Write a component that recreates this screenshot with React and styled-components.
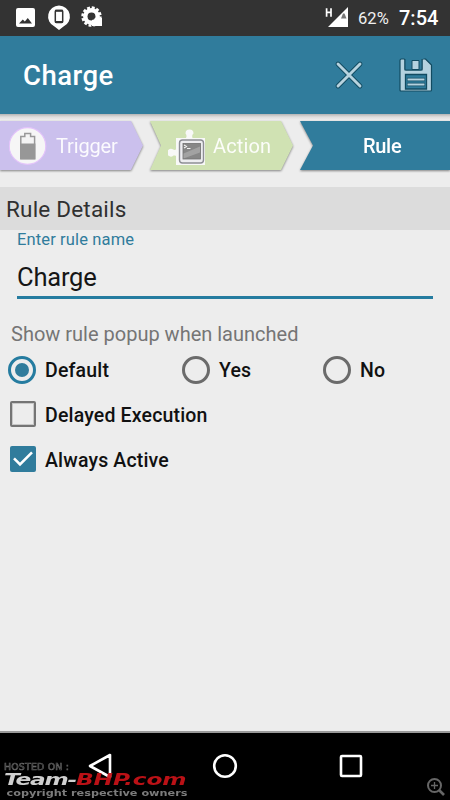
import React, { useState } from 'react';
import styled, { createGlobalStyle } from 'styled-components'

const GlobalStyle = createGlobalStyle`
  *{
    box-sizing:border-box;
  }
  body{
    margin:0;
    background-color:#000;
    font-family:Roboto, sans-serif;
  }
  svg{
    display:block;
    flex:none;
  }
`

const Container = styled.div`
  position:relative;
  display:flex;
  flex-direction:column;
  width:450px;
  height:800px;
  overflow:hidden;
  background-color:#ededed;
`

const StatusBar = styled.div`
  display:flex;
  justify-content:space-between;
  height:36px;
  background-color:#333;
`

const Battery = styled.span`
  width:41px;
  padding-top:8px;
  color:#f0f0f0;
  font-size:16.5px;
  line-height:21px;
  letter-spacing:0.1px;
`

const Clock = styled.span`
  width:51px;
  padding-top:7px;
  color:#fff;
  font-size:20px;
  font-weight:500;
  line-height:22px;
`

const StatusRight = styled.div`
  display:flex;
`

const AppBar = styled.header`
  display:flex;
  align-items:center;
  height:78px;
  padding-left:23px;
  background-color:#307c9c;
`

const Title = styled.h1`
  flex:1;
  margin:0;
  padding-top:1px;
  color:#fff;
  font-size:27.5px;
  font-weight:500;
  line-height:32px;
  letter-spacing:0.5px;
`

const IconButton = styled.button`
  display:flex;
  margin-right:${props => props.gap}px;
  padding:0;
  border:none;
  background:none;
  cursor:pointer;
`

const Steps = styled.nav`
  display:flex;
  height:73px;
  padding-top:7px;
  background:linear-gradient(#b4b4b4, #dedede 3px, #ededed 6px);
`

const StepShadow = styled.div`
  width:150px;
  height:49px;
  filter:drop-shadow(0 1px 1px rgba(0,0,0,0.45));
`

const Step = styled.div`
  display:flex;
  align-items:center;
  height:49px;
  padding-left:${props => props.inset}px;
  gap:${props => props.gap || 0}px;
  color:${props => props.active ? '#fff' : 'rgba(255,255,255,0.92)'};
  background-color:${props => props.bg};
  clip-path:${props => props.shape};
  font-size:20px;
  font-weight:${props => props.active ? 500 : 400};
  letter-spacing:${props => props.spacing}px;
`

const SectionTitle = styled.h2`
  height:43px;
  margin:0;
  padding:1px 0 0 6px;
  color:#303030;
  background-color:#dcdcdc;
  font-size:22.5px;
  font-weight:400;
  line-height:43px;
  letter-spacing:0.2px;
`

const Field = styled.div`
  height:69px;
  margin:0 17px;
  border-bottom:3px solid #257ca0;
`

const FieldLabel = styled.div`
  height:21px;
  color:#307c9c;
  font-size:16.5px;
  line-height:20px;
  letter-spacing:0.13px;
`

const FieldValue = styled.div`
  padding-top:8px;
  color:#161616;
  font-size:25.5px;
  line-height:36px;
  letter-spacing:-0.2px;
`

const Hint = styled.div`
  margin-top:23px;
  padding-left:11px;
  height:25px;
  color:#757575;
  font-size:20px;
  line-height:25px;
`

const Options = styled.div`
  display:grid;
  grid-template-columns:174px 141px 1fr;
  padding-left:8px;
`

const OptionRow = styled.div`
  display:flex;
  align-items:center;
  gap:8px;
  height:45px;
  padding-left:${props => props.inset || 0}px;
  color:#111;
  font-size:19.5px;
  font-weight:500;
  letter-spacing:0.17px;
  cursor:pointer;
`

const OptionText = styled.span`
  padding-top:1px;
`

const Radio = styled.span`
  display:flex;
  align-items:center;
  justify-content:center;
  width:28px;
  height:28px;
  margin-right:1px;
  border:3px solid ${props => props.checked ? '#257ca0' : '#6b6b6b'};
  border-radius:50%;
  &::after{
    content:'';
    width:14px;
    height:14px;
    border-radius:50%;
    background-color:${props => props.checked ? '#307c9c' : 'transparent'};
  }
`

const Checkbox = styled.span`
  display:flex;
  align-items:center;
  justify-content:center;
  width:26px;
  height:26px;
  margin-right:1px;
  margin-top:-1px;
  border:${props => props.checked ? 'none' : '2px solid #757575'};
  border-radius:2px;
  box-shadow:${props => props.checked ? 'none' : 'inset 0 0 0 1px rgba(117,117,117,0.3)'};
  background-color:${props => props.checked ? '#307c9c' : 'transparent'};
`

const NavBar = styled.footer`
  display:flex;
  align-items:center;
  height:69px;
  margin-top:auto;
  padding:0 0 2px 86px;
  gap:98px;
  border-top:2px solid #9a9a9a;
  background-color:#000;
  svg:last-child{
    margin-left:2px;
  }
`

const Watermark = styled.div`
  position:absolute;
  left:4px;
  bottom:0;
  height:39px;
  font-family:"DejaVu Sans", sans-serif;
  white-space:nowrap;
`

const Hosted = styled.div`
  height:11px;
  color:#000;
  font-size:8.5px;
  line-height:12px;
  letter-spacing:0.2px;
  transform:scaleX(1.1);
  transform-origin:left;
  -webkit-text-stroke:0.6px #666;
`

const Site = styled.div`
  height:16px;
  color:#d0d0d0;
  font-size:16.5px;
  font-weight:bold;
  font-style:italic;
  line-height:16px;
  letter-spacing:-0.9px;
  transform:scaleX(1.41);
  transform-origin:left;
  span{
    color:rgba(200,18,24,0.93);
    letter-spacing:-0.05px;
  }
`

const Copyright = styled.div`
  height:12px;
  padding-left:2px;
  color:#7c7c7c;
  font-size:9px;
  font-weight:bold;
  line-height:10px;
  transform:scaleX(1.25);
  transform-origin:left;
`

const Magnifier = styled.svg`
  position:absolute;
  right:4px;
  bottom:3px;
`

const StatusIcons = () => (
  <svg width="120" height="36" viewBox="0 0 120 36">
    <path fill="#fff" fillRule="evenodd" d="M18 8h15q2 0 2 2v15q0 2-2 2H18q-2 0-2-2V10q0-2 2-2zM19 23.5h13l-4.2-5.5-3 3.6-2-2.2z" />
    <path fill="#fff" d="M59 5.5a11 11 0 0 1 4.5 21L59 30l-4.5-3.5A11 11 0 0 1 59 5.5z" />
    <rect x="55.3" y="10.5" width="7.4" height="12" rx="1" fill="#fff" stroke="#333" strokeWidth="1.5" />
    <path stroke="#333" strokeWidth="2" d="M55 10.8h8M55 22h8" />
    <circle cx="91.5" cy="16.5" r="6.2" fill="none" stroke="#fff" strokeWidth="4.5" />
    <circle cx="91.5" cy="16.5" r="9" fill="none" stroke="#fff" strokeWidth="2.4" strokeDasharray="2.9 1.81" />
    <path fill="#fff" d="M92 18h10v8H92z" />
    <circle cx="91.5" cy="16.5" r="3.6" fill="#333" />
  </svg>
)

const SignalIcon = () => (
  <svg width="34" height="36" viewBox="0 0 34 36">
    <path fill="#fff" d="M4 27L24 7v20z" />
    <path fill="none" stroke="#fff" strokeWidth="1.7" d="M2.6 8.3v8.4M7 8.3v8.4M2.6 12.4H7" />
    <path fill="#777" d="M17 18.5l2-5h1.5l2 5z" />
  </svg>
)

const CloseIcon = () => (
  <svg width="30" height="30" viewBox="0 0 30 30">
    <path stroke="#124b61" strokeWidth="4.8" strokeLinecap="round" d="M4 4l22 22M26 4L4 26" />
    <path stroke="#b7d3df" strokeWidth="2.9" strokeLinecap="round" d="M4 4l22 22M26 4L4 26" />
  </svg>
)

const SaveIcon = () => (
  <svg width="34" height="34" viewBox="0 0 34 34">
    <path fill="#b4d2df" stroke="#124b61" strokeWidth="1.2" strokeLinejoin="round" d="M2.5 1H5q1 0 1 1v10h17V1h3.5l6 6v25q0 1-1 1H2q-1 0-1-1V2.500Q1 1 2.5 1z" />
    <path fill="#307c9c" stroke="#124b61" strokeWidth="1" d="M6 0v11q0 1 1 1h15q1 0 1-1V0z" />
    <path stroke="#307c9c" strokeWidth="2" d="M5.5 0h19" />
    <path fill="#b4d2df" stroke="#124b61" strokeWidth="1" d="M13 2.5h7v9h-7z" />
    <path fill="#307c9c" stroke="#124b61" strokeWidth="1.3" d="M6.5 16.5h21V31h-21z" />
    <path stroke="#124b61" strokeWidth="3.4" d="M8 21.5h18M8 26.5h18" />
    <path stroke="#b4d2df" strokeWidth="1.9" d="M8.5 21.5h17M8.5 26.5h17" />
  </svg>
)

const BatteryIcon = () => (
  <svg width="38" height="38" viewBox="0 0 38 38">
    <circle cx="18.5" cy="19" r="18.3" fill="#f6f6f6" stroke="#e3c3fa" strokeWidth="1.2" />
    <path fill="#f4f4f4" stroke="#999" strokeWidth="1.5" d="M11.8 31.5V9.500h4V6.500h5.800v3h4v22z" />
    <path fill="#979797" d="M11.2 16.5h15.2v16H11.2z" />
  </svg>
)

const PluginIcon = () => (
  <svg width="38" height="40" viewBox="0 0 38 40">
    <path fill="#f8f8f8" d="M8 12h10c1-2 .5-3-.5-4.500a4 4 0 1 1 8 0C24 9 24 10 24.500 12H37v27H8v-9c-2-1-3 0-4 .5a3.900 3.900 0 1 1 0-7.500c1.500.4 2 1.500 4 .5z" />
    <rect x="11.5" y="14" width="24" height="23" rx="3" fill="#ededf0" stroke="#8d8e94" strokeWidth="1.400" />
    <rect x="15" y="17.5" width="17.500" height="15.500" fill="#878787" stroke="#707070" strokeWidth="0.800" />
    <path fill="#b4b4b4" d="M15.500 27.500l16.500-7v6L15.500 32.500z" opacity=".6" />
    <path fill="none" stroke="#f4f4f4" strokeWidth="1.100" d="M16 19l2.500 1.500L16 22M19 22.500h3.500" />
  </svg>
)

const options = ['Default', 'Yes', 'No']

const App = () => {
  const [popup, setPopup] = useState('Default')
  const [delayed, setDelayed] = useState(false)
  const [active, setActive] = useState(true)
  const check = (
    <svg width="20" height="18" viewBox="0 0 20 18">
      <path fill="none" stroke="#fff" strokeWidth="2.6" d="M1 8.3l6 6L19 2.3" />
    </svg>
  )
  return (
    <Container>
      <GlobalStyle />
      <StatusBar>
        <StatusIcons />
        <StatusRight>
          <SignalIcon />
          <Battery>62%</Battery>
          <Clock>7:54</Clock>
        </StatusRight>
      </StatusBar>
      <AppBar>
        <Title>Charge</Title>
        <IconButton gap={35}><CloseIcon /></IconButton>
        <IconButton gap={17}><SaveIcon /></IconButton>
      </AppBar>
      <Steps>
        <StepShadow>
          <Step bg="#cbc0ed" inset={9} gap={9} spacing={-0.15} shape="polygon(0 0, 131px 0, 143px 50%, 131px 100%, 0 100%)">
            <BatteryIcon />Trigger
          </Step>
        </StepShadow>
        <StepShadow>
          <Step bg="#d0e2b3" inset={18} gap={7} spacing={0.15} shape="polygon(0 0, 131px 0, 143px 50%, 131px 100%, 0 100%, 11px 50%)">
            <PluginIcon />Action
          </Step>
        </StepShadow>
        <StepShadow>
          <Step active bg="#307c9c" inset={63} spacing={-0.3} shape="polygon(0 0, 100% 0, 100% 100%, 0 100%, 13px 50%)">
            Rule
          </Step>
        </StepShadow>
      </Steps>
      <SectionTitle>Rule Details</SectionTitle>
      <Field>
        <FieldLabel>Enter rule name</FieldLabel>
        <FieldValue>Charge</FieldValue>
      </Field>
      <Hint>Show rule popup when launched</Hint>
      <Options>
        {
          options.map((item) => (
            <OptionRow key={item} onClick={() => setPopup(item)}>
              <Radio checked={popup === item} />
              <OptionText>{item}</OptionText>
            </OptionRow>
          ))
        }
      </Options>
      <OptionRow inset={10} onClick={() => setDelayed(!delayed)}>
        <Checkbox checked={delayed}>{delayed && check}</Checkbox>
        <OptionText>Delayed Execution</OptionText>
      </OptionRow>
      <OptionRow inset={10} onClick={() => setActive(!active)}>
        <Checkbox checked={active}>{active && check}</Checkbox>
        <OptionText>Always Active</OptionText>
      </OptionRow>
      <NavBar>
        <svg width="28" height="28" viewBox="0 0 28 28">
          <path fill="none" stroke="#fff" strokeWidth="2.6" strokeLinejoin="round" d="M24 3v22L4 14z" />
        </svg>
        <svg width="26" height="26" viewBox="0 0 26 26">
          <circle cx="13" cy="13" r="10.8" fill="none" stroke="#fff" strokeWidth="2.6" />
        </svg>
        <svg width="26" height="26" viewBox="0 0 26 26">
          <rect x="3" y="3" width="20" height="20" rx="1" fill="none" stroke="#fff" strokeWidth="2.6" />
        </svg>
      </NavBar>
      <Watermark>
        <Hosted>HOSTED ON :</Hosted>
        <Site>Team-<span>BHP.com</span></Site>
        <Copyright>copyright respective owners</Copyright>
      </Watermark>
      <Magnifier width="20" height="20" viewBox="0 0 20 20">
        <circle cx="8.5" cy="8.5" r="6.5" fill="none" stroke="#666" strokeWidth="2" />
        <path stroke="#666" strokeWidth="1.3" d="M5 8.5h7M8.5 5v7" />
        <path stroke="#666" strokeWidth="2.6" d="M13 13l5 5" />
      </Magnifier>
    </Container>
  )
}

export default App
